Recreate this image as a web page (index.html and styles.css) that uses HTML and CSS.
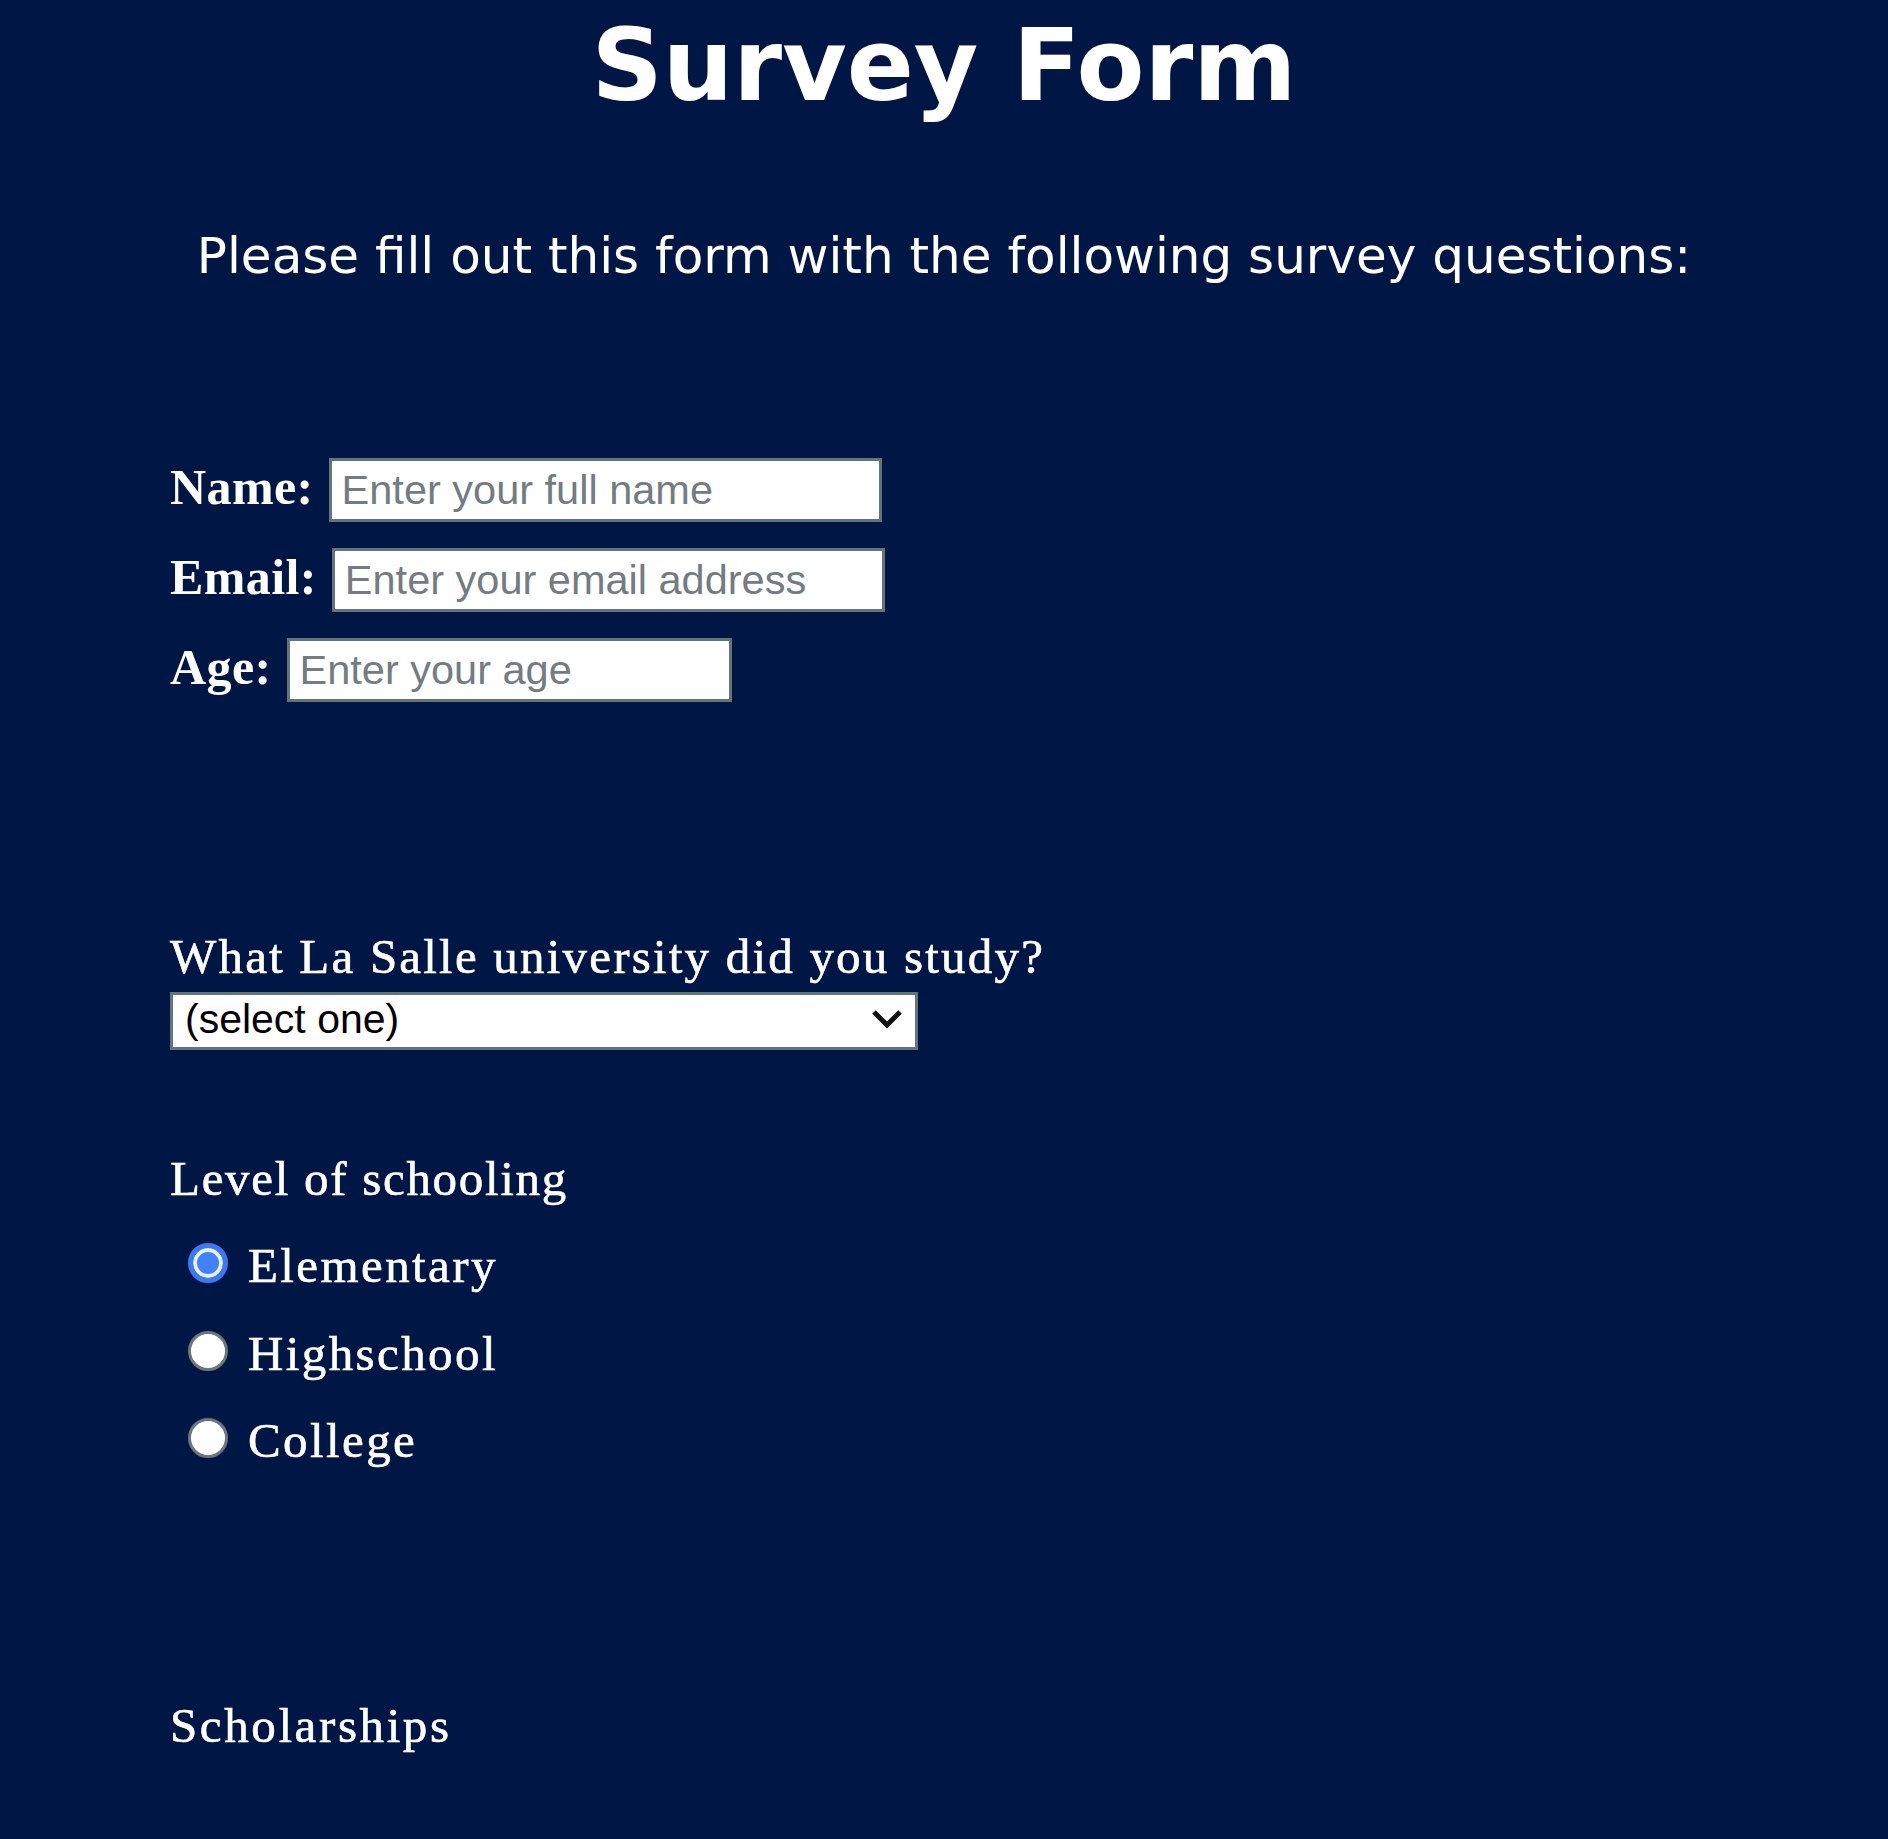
FILE: index.html
```html
<!DOCTYPE html>
<html lang="en">
<head>
<meta charset="utf-8">
<title>Survey Form</title>
<link rel="stylesheet" href="styles.css">
</head>
<body>
<h1 class="title">Survey Form</h1>
<p class="intro">Please fill out this form with the following survey questions:</p>
<form class="survey">
  <div class="field-row"><label class="field-label" for="name">Name:</label><input class="text-input wide" id="name" type="text" placeholder="Enter your full name"></div>
  <div class="field-row"><label class="field-label" for="email">Email:</label><input class="text-input wide" id="email" type="email" placeholder="Enter your email address"></div>
  <div class="field-row"><label class="field-label" for="age">Age:</label><input class="text-input narrow" id="age" type="number" placeholder="Enter your age"></div>

  <label class="question uni-question" for="uni">What La Salle university did you study?</label>
  <div class="select-wrap">
    <select class="select" id="uni"><option>(select one)</option></select>
    <svg class="chevron" width="32" height="20" viewBox="0 0 32 20"><polyline points="3,3 16,16 29,3" fill="none" stroke="#111" stroke-width="5"/></svg>
  </div>

  <p class="question level-question">Level of schooling</p>
  <label class="radio-row first"><input class="radio" type="radio" name="level" checked>Elementary</label>
  <label class="radio-row"><input class="radio" type="radio" name="level">Highschool</label>
  <label class="radio-row"><input class="radio" type="radio" name="level">College</label>

  <p class="question scholarships">Scholarships</p>
</form>
</body>
</html>
```
FILE: styles.css
```css
html {
  background: #001745;
}
body {
  margin: 0;
  background: #001745;
  color: #ffffff;
  min-height: 1839px;
}
.title {
  margin: 8px 0 0;
  text-align: center;
  font-family: "DejaVu Sans", sans-serif;
  font-weight: bold;
  font-size: 99px;
  line-height: 115px;
}
.intro {
  margin: 104px 0 0;
  text-align: center;
  font-family: "DejaVu Sans", sans-serif;
  font-size: 50px;
  line-height: 58px;
}
.survey {
  padding-left: 170px;
  margin: 173px 0 0;
}
.field-row {
  display: flex;
  align-items: baseline;
  gap: 15px;
  margin-bottom: 26px;
}
.field-label {
  font-family: "Liberation Serif", serif;
  font-weight: bold;
  font-size: 50px;
  line-height: 56px;
  letter-spacing: 0.4px;
}
.text-input {
  box-sizing: border-box;
  height: 64px;
  border: 3px solid #647579;
  background: #ffffff;
  padding: 0 10px;
  font-family: "Liberation Sans", Arial, sans-serif;
  font-size: 41.5px;
  color: #222;
  outline: none;
  -moz-appearance: textfield;
}
.text-input::-webkit-outer-spin-button,
.text-input::-webkit-inner-spin-button {
  -webkit-appearance: none;
  margin: 0;
}
.text-input::placeholder {
  color: #737c80;
}
.wide {
  width: 553px;
}
.narrow {
  width: 445px;
}
.question {
  display: block;
  margin: 0;
  font-family: "Liberation Serif", serif;
  font-size: 49px;
  line-height: 56px;
  letter-spacing: 2.2px;
  -webkit-text-stroke: 0.6px #ffffff;
}
.uni-question {
  margin-top: 227px;
}
.select-wrap {
  position: relative;
  width: 748px;
  margin-top: 7px;
}
.select {
  -webkit-appearance: none;
  appearance: none;
  box-sizing: border-box;
  display: block;
  width: 100%;
  height: 58px;
  border: 3px solid #647579;
  border-radius: 0;
  background: #ffffff;
  padding: 0 12px 5px;
  font-family: "Liberation Sans", Arial, sans-serif;
  font-size: 41px;
  color: #000;
  outline: none;
}
.chevron {
  position: absolute;
  right: 15px;
  top: 17px;
  pointer-events: none;
}
.level-question {
  margin-top: 101px;
  letter-spacing: 1.7px;
}
.radio-row {
  display: block;
  padding-left: 18px;
  margin-top: 31.5px;
  font-family: "Liberation Serif", serif;
  font-size: 49px;
  line-height: 56px;
  letter-spacing: 2.4px;
  -webkit-text-stroke: 0.6px #ffffff;
}
.radio-row.first {
  margin-top: 31px;
}
.radio {
  -webkit-appearance: none;
  appearance: none;
  box-sizing: border-box;
  width: 40px;
  height: 40px;
  margin: 0 20px 0 0;
  border-radius: 50%;
  border: 3px solid #67777b;
  background: #ffffff;
  vertical-align: -1px;
}
.radio:checked {
  border: 5px solid #3b78f3;
  background: #4180ff;
  box-shadow: inset 0 0 0 4px #e6f1ff;
}
.scholarships {
  margin-top: 229px;
  letter-spacing: 2.6px;
}
```
